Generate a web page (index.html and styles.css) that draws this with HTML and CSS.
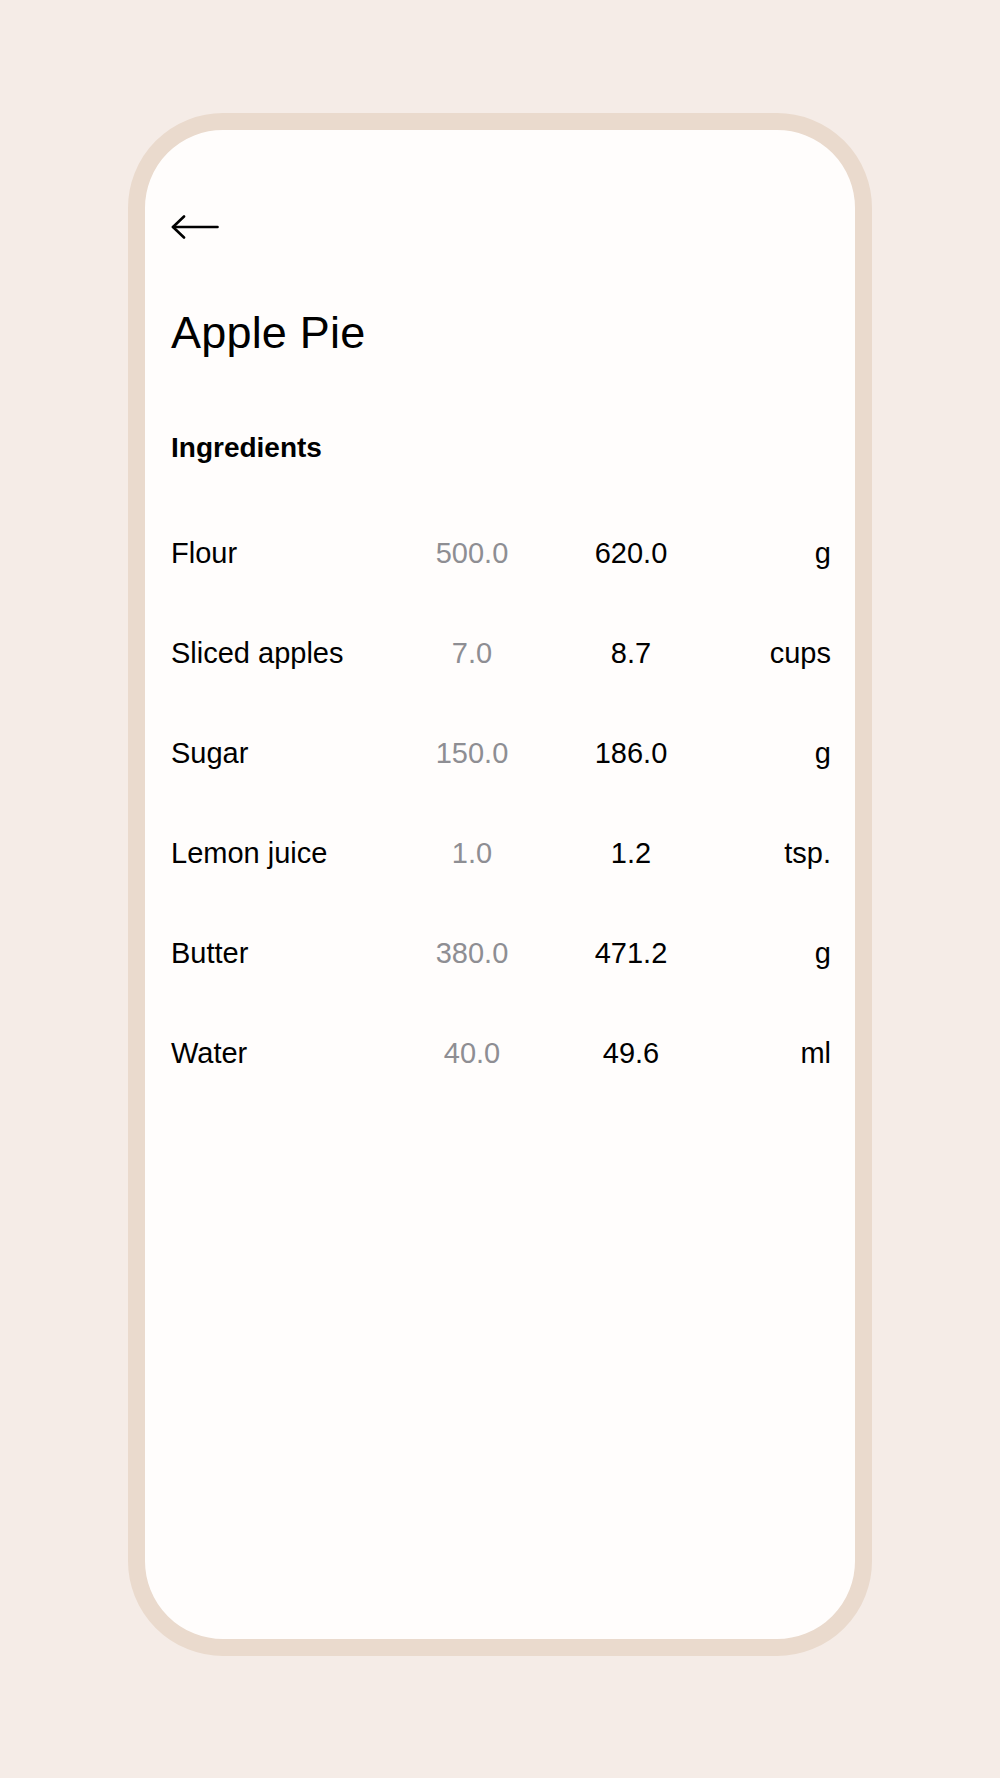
FILE: index.html
```html
<!DOCTYPE html>
<html lang="en">
<head>
    <meta charset="UTF-8">
    <meta name="viewport" content="width=device-width, initial-scale=1.0">
    <title>Apple Pie</title>
    <link rel="stylesheet" href="styles.css">
</head>
<body>
    <div class="phone">
        <div class="screen">
            <button class="back-btn" aria-label="Back">
                <svg width="48" height="24" viewBox="0 0 48 24" fill="none" stroke="#000" stroke-width="2.6" stroke-linecap="round" stroke-linejoin="round">
                    <line x1="2" y1="12" x2="46.5" y2="12"/>
                    <polyline points="13,1.5 2,12 13,22.5"/>
                </svg>
            </button>

            <h1 class="title">Apple Pie</h1>
            <h2 class="section-title">Ingredients</h2>

            <div class="ingredients">
                <div class="row">
                    <span class="name">Flour</span>
                    <span class="original">500.0</span>
                    <span class="scaled">620.0</span>
                    <span class="unit">g</span>
                </div>
                <div class="row">
                    <span class="name">Sliced apples</span>
                    <span class="original">7.0</span>
                    <span class="scaled">8.7</span>
                    <span class="unit">cups</span>
                </div>
                <div class="row">
                    <span class="name">Sugar</span>
                    <span class="original">150.0</span>
                    <span class="scaled">186.0</span>
                    <span class="unit">g</span>
                </div>
                <div class="row">
                    <span class="name">Lemon juice</span>
                    <span class="original">1.0</span>
                    <span class="scaled">1.2</span>
                    <span class="unit">tsp.</span>
                </div>
                <div class="row">
                    <span class="name">Butter</span>
                    <span class="original">380.0</span>
                    <span class="scaled">471.2</span>
                    <span class="unit">g</span>
                </div>
                <div class="row">
                    <span class="name">Water</span>
                    <span class="original">40.0</span>
                    <span class="scaled">49.6</span>
                    <span class="unit">ml</span>
                </div>
            </div>
        </div>
    </div>
</body>
</html>
```

FILE: styles.css
```css
body {
    margin: 0;
    padding: 113px 0 0;
    height: 1778px;
    box-sizing: border-box;
    background-color: #f5ece7;
    font-family: "Liberation Sans", Arial, sans-serif;
    color: #000;
}

.phone {
    width: 744px;
    height: 1543px;
    margin: 0 auto;
    box-sizing: border-box;
    border: 17px solid #eadacd;
    border-radius: 95px;
    background-color: #fffdfc;
    overflow: hidden;
}

.screen {
    padding: 85px 24px 0 26px;
}

.back-btn {
    display: block;
    padding: 0;
    border: none;
    background: none;
    width: 48px;
    height: 24px;
    cursor: pointer;
}

.back-btn svg {
    display: block;
}

.title {
    margin: 68px 0 0;
    font-size: 45px;
    line-height: 52px;
    font-weight: 400;
    letter-spacing: 0.2px;
}

.section-title {
    margin: 73px 0 0;
    font-size: 28px;
    line-height: 32px;
    font-weight: 700;
}

.ingredients {
    margin-top: 39px;
}

.row {
    display: grid;
    grid-template-columns: 230px 142px 176px 1fr;
    align-items: center;
    height: 100px;
    font-size: 29px;
    line-height: 34px;
}

.original {
    text-align: center;
    color: #8e8e93;
}

.scaled {
    text-align: center;
}

.unit {
    text-align: right;
}
```
